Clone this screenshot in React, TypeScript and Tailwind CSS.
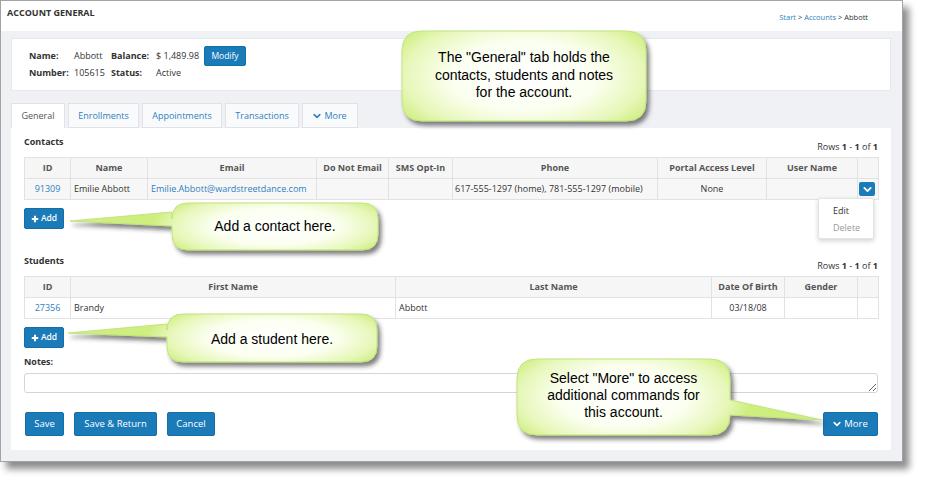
import React from "react";

const Chevron = ({ className = "" }: { className?: string }) => (
  <svg viewBox="0 0 10 10" className={className}>
    <path d="M1.5 3.2 L5 6.7 L8.5 3.2" fill="none" stroke="currentColor" strokeWidth="2" strokeLinecap="round" strokeLinejoin="round" />
  </svg>
);

const Plus = () => (
  <svg viewBox="0 0 10 10" className="w-[8px] h-[8px]">
    <path d="M5 1 V9 M1 5 H9" stroke="currentColor" strokeWidth="2.6" />
  </svg>
);

function calloutPath(
  x1: number,
  y1: number,
  x2: number,
  y2: number,
  r: number,
  tail?: { side: "left" | "right"; a: number; b: number; tx: number; ty: number }
) {
  let d = `M ${x1 + r} ${y1} H ${x2 - r} Q ${x2} ${y1} ${x2} ${y1 + r} `;
  if (tail && tail.side === "right") {
    d += `V ${tail.a} L ${tail.tx} ${tail.ty} L ${x2} ${tail.b} `;
  }
  d += `V ${y2 - r} Q ${x2} ${y2} ${x2 - r} ${y2} H ${x1 + r} Q ${x1} ${y2} ${x1} ${y2 - r} `;
  if (tail && tail.side === "left") {
    d += `V ${tail.b} L ${tail.tx} ${tail.ty} L ${x1} ${tail.a} `;
  }
  d += `V ${y1 + r} Q ${x1} ${y1} ${x1 + r} ${y1} Z`;
  return d;
}

const callouts = [
  { id: "c1", x1: 402, y1: 31, x2: 646, y2: 121, r: 20 },
  { id: "c2", x1: 172, y1: 203, x2: 378, y2: 250, r: 16, tail: { side: "left" as const, a: 212, b: 226, tx: 70, ty: 221 } },
  { id: "c3", x1: 167, y1: 314, x2: 377, y2: 362, r: 16, tail: { side: "left" as const, a: 324, b: 337, tx: 68, ty: 333 } },
  { id: "c4", x1: 517, y1: 359, x2: 730, y2: 435, r: 20, tail: { side: "right" as const, a: 400, b: 415, tx: 822, ty: 420 } },
];

const Th = ({ children }: { children?: React.ReactNode }) => (
  <th className="border border-[#e2e2e2] font-bold text-[#555] text-[9px] h-[21px] text-center align-middle">{children}</th>
);

const Td = ({ children, className = "" }: { children?: React.ReactNode; className?: string }) => (
  <td className={`border border-[#e2e2e2] text-[9px] text-[#333] h-[21px] align-middle whitespace-nowrap overflow-visible ${className}`}>{children}</td>
);

const BlueBtn = ({ children, className = "" }: { children: React.ReactNode; className?: string }) => (
  <button className={`bg-[#1b7bb8] border border-[#166ea6] text-white rounded-[2px] flex items-center justify-center ${className}`}>{children}</button>
);

const Rows = () => (
  <span className="text-[9px] text-[#333] leading-[14px]">
    Rows <b>1</b> - <b>1</b> of <b>1</b>
  </span>
);

export default function App() {
  return (
    <div className="relative w-[927px] h-[486px] bg-white overflow-hidden font-['Open_Sans',sans-serif]">
      <div className="w-[903px] h-[462px] border border-[#a3a3a3] bg-[#eff1f5] shadow-[6px_7px_7px_rgba(0,0,0,0.45)] flex flex-col">
        {/* header */}
        <div className="h-[30px] bg-white flex justify-between px-[6px] shrink-0">
          <div className="pt-[5px] text-[9px] font-bold text-[#333] leading-[14px]">ACCOUNT GENERAL</div>
          <div className="pt-[10px] pr-[28px] text-[7.5px] leading-[12px] text-[#333]">
            <span className="text-[#2f7fc1]">Start</span> &gt; <span className="text-[#2f7fc1]">Accounts</span> &gt; Abbott
          </div>
        </div>

        <div className="pl-[10px] pr-[11px] pt-[7px] flex flex-col">
          {/* info card */}
          <div className="h-[53px] bg-white pl-[17px] pt-[7px] text-[9px] text-[#333] border border-[#e6e8ec]">
            <div className="flex items-center h-[20px]">
              <span className="w-[45px] font-bold">Name:</span>
              <span className="w-[37px]">Abbott</span>
              <span className="w-[45px] font-bold">Balance:</span>
              <span className="w-[48px]">$ 1,489.98</span>
              <BlueBtn className="w-[42px] h-[20px] text-[8.5px]">Modify</BlueBtn>
            </div>
            <div className="flex items-center h-[14px]">
              <span className="w-[45px] font-bold">Number:</span>
              <span className="w-[37px]">105615</span>
              <span className="w-[45px] font-bold">Status:</span>
              <span className="w-[48px]">Active</span>
            </div>
          </div>

          {/* tabs */}
          <div className="flex gap-[3px] mt-[12px] h-[25px] items-end">
            <div className="w-[54px] h-[25px] bg-white border border-b-0 border-[#e0e2e6] flex items-center justify-center text-[9px] text-[#555]">General</div>
            <div className="w-[71px] h-[25px] bg-[#f9fafb] border border-[#e0e2e6] flex items-center justify-center text-[9px] text-[#2f7fc1]">Enrollments</div>
            <div className="w-[80px] h-[25px] bg-[#f9fafb] border border-[#e0e2e6] flex items-center justify-center text-[9px] text-[#2f7fc1]">Appointments</div>
            <div className="w-[74px] h-[25px] bg-[#f9fafb] border border-[#e0e2e6] flex items-center justify-center text-[9px] text-[#2f7fc1]">Transactions</div>
            <div className="w-[56px] h-[25px] bg-[#f9fafb] border border-[#e0e2e6] flex items-center justify-center gap-[3px] text-[9px] text-[#2f7fc1]">
              <Chevron className="w-[8px] h-[8px]" />More
            </div>
          </div>

          {/* main card */}
          <div className="bg-white h-[322px] px-[13px] pt-[7px] flex flex-col">
            <div className="h-[22px] flex justify-between">
              <span className="self-start text-[9px] font-bold text-[#333] leading-[14px]">Contacts</span>
              <span className="self-end mb-[1px]"><Rows /></span>
            </div>
            <div className="relative">
              <table className="table-fixed border-collapse w-[854px]">
                <colgroup>
                  <col className="w-[46px]" />
                  <col className="w-[77px]" />
                  <col className="w-[169px]" />
                  <col className="w-[72px]" />
                  <col className="w-[64px]" />
                  <col className="w-[205px]" />
                  <col className="w-[109px]" />
                  <col className="w-[91px]" />
                  <col className="w-[21px]" />
                </colgroup>
                <thead>
                  <tr className="bg-[#f6f6f6]">
                    <Th>ID</Th>
                    <Th>Name</Th>
                    <Th>Email</Th>
                    <Th>Do Not Email</Th>
                    <Th>SMS Opt-In</Th>
                    <Th>Phone</Th>
                    <Th>Portal Access Level</Th>
                    <Th>User Name</Th>
                    <Th />
                  </tr>
                </thead>
                <tbody>
                  <tr className="bg-[#f7f7f7]">
                    <Td className="text-center !text-[#2f7fc1]">91309</Td>
                    <Td className="pl-[3px]">Emilie Abbott</Td>
                    <Td className="pl-[3px] !text-[#2f7fc1]">Emilie.Abbott@wardstreetdance.com</Td>
                    <Td />
                    <Td />
                    <Td className="pl-[2px]">617-555-1297 (home), 781-555-1297 (mobile)</Td>
                    <Td className="text-center">None</Td>
                    <Td />
                    <Td>
                      <div className="w-[16px] h-[14px] ml-[1px] bg-[#1b7bb8] rounded-[2px] flex items-center justify-center text-white">
                        <Chevron className="w-[9px] h-[9px]" />
                      </div>
                    </Td>
                  </tr>
                </tbody>
              </table>
              <div className="absolute right-[4px] top-[41px] w-[56px] h-[41px] bg-white border border-[#e4e4e4] rounded-[2px] shadow-[0_2px_5px_rgba(0,0,0,0.18)] pl-[14px] pt-[3px] text-[9px] leading-[17px] z-10">
                <div className="text-[#333]">Edit</div>
                <div className="text-[#999]">Delete</div>
              </div>
            </div>
            <div className="mt-[8px]">
              <BlueBtn className="w-[40px] h-[21px] text-[8.5px] font-semibold gap-[2px]"><Plus />Add</BlueBtn>
            </div>

            <div className="h-[22px] flex justify-between mt-[25px]">
              <span className="self-start text-[9px] font-bold text-[#333] leading-[14px]">Students</span>
              <span className="self-end mb-[1px]"><Rows /></span>
            </div>
            <table className="table-fixed border-collapse w-[854px]">
              <colgroup>
                <col className="w-[46px]" />
                <col className="w-[325px]" />
                <col className="w-[316px]" />
                <col className="w-[73px]" />
                <col className="w-[73px]" />
                <col className="w-[21px]" />
              </colgroup>
              <thead>
                <tr className="bg-[#f6f6f6]">
                  <Th>ID</Th>
                  <Th>First Name</Th>
                  <Th>Last Name</Th>
                  <Th>Date Of Birth</Th>
                  <Th>Gender</Th>
                  <Th />
                </tr>
              </thead>
              <tbody>
                <tr className="bg-white">
                  <Td className="text-center !text-[#2f7fc1]">27356</Td>
                  <Td className="pl-[3px]">Brandy</Td>
                  <Td className="pl-[3px]">Abbott</Td>
                  <Td className="text-center">03/18/08</Td>
                  <Td />
                  <Td />
                </tr>
              </tbody>
            </table>
            <div className="mt-[8px]">
              <BlueBtn className="w-[40px] h-[21px] text-[8.5px] font-semibold gap-[2px]"><Plus />Add</BlueBtn>
            </div>

            <div className="mt-[7px] text-[9px] font-bold text-[#333] leading-[14px]">Notes:</div>
            <textarea className="mt-[4px] w-[854px] h-[20px] border border-[#d5d5d5] rounded-[3px] resize-y block" />

            <div className="mt-[19px] flex justify-between items-center">
              <div className="flex gap-[10px] pl-[1px]">
                <BlueBtn className="w-[39px] h-[24px] text-[9.5px]">Save</BlueBtn>
                <BlueBtn className="w-[83px] h-[24px] text-[9.5px]">Save &amp; Return</BlueBtn>
                <BlueBtn className="w-[48px] h-[24px] text-[9.5px]">Cancel</BlueBtn>
              </div>
              <BlueBtn className="w-[55px] h-[24px] text-[9.5px] gap-[3px]">
                <Chevron className="w-[8px] h-[8px]" />More
              </BlueBtn>
            </div>
          </div>
        </div>
      </div>

      {/* callouts overlay */}
      <svg className="absolute left-0 top-0 pointer-events-none" width="927" height="486">
        <defs>
          <filter id="sh" x="-10%" y="-10%" width="130%" height="140%">
            <feDropShadow dx="3" dy="4" stdDeviation="2.2" floodColor="#2a2a2a" floodOpacity="0.6" />
          </filter>
          {callouts.map((c) => (
            <radialGradient
              key={c.id}
              id={`g-${c.id}`}
              gradientUnits="userSpaceOnUse"
              cx={(c.x1 + c.x2) / 2}
              cy={(c.y1 + c.y2) / 2}
              r={(c.x2 - c.x1) * 0.6}
              gradientTransform={`translate(${(c.x1 + c.x2) / 2} ${(c.y1 + c.y2) / 2}) scale(1 ${(c.y2 - c.y1) / (c.x2 - c.x1) * 1.3}) translate(${-(c.x1 + c.x2) / 2} ${-(c.y1 + c.y2) / 2})`}
            >
              <stop offset="0" stopColor="#ffffff" />
              <stop offset="0.5" stopColor="#fbfff0" />
              <stop offset="0.82" stopColor="#e6f7b8" />
              <stop offset="1" stopColor="#cfee80" />
            </radialGradient>
          ))}
        </defs>
        {callouts.map((c) => (
          <path
            key={c.id}
            d={calloutPath(c.x1, c.y1, c.x2, c.y2, c.r, c.tail)}
            fill={`url(#g-${c.id})`}
            stroke="#c3e37c"
            strokeWidth="1"
            filter="url(#sh)"
          />
        ))}
      </svg>

      <div className="absolute left-[402px] top-[49px] w-[244px] text-center text-[14px] leading-[17.5px] text-black font-['Liberation_Sans',Arial,sans-serif]">
        The "General" tab holds the
        <br />
        contacts, students and notes
        <br />
        for the account.
      </div>
      <div className="absolute left-[172px] top-[217px] w-[206px] text-center text-[14px] leading-[18px] text-black font-['Liberation_Sans',Arial,sans-serif]">
        Add a contact here.
      </div>
      <div className="absolute left-[167px] top-[330px] w-[210px] text-center text-[14px] leading-[18px] text-black font-['Liberation_Sans',Arial,sans-serif]">
        Add a student here.
      </div>
      <div className="absolute left-[517px] top-[370px] w-[213px] text-center text-[14px] leading-[17px] text-black font-['Liberation_Sans',Arial,sans-serif]">
        Select "More" to access
        <br />
        additional commands for
        <br />
        this account.
      </div>
    </div>
  );
}
